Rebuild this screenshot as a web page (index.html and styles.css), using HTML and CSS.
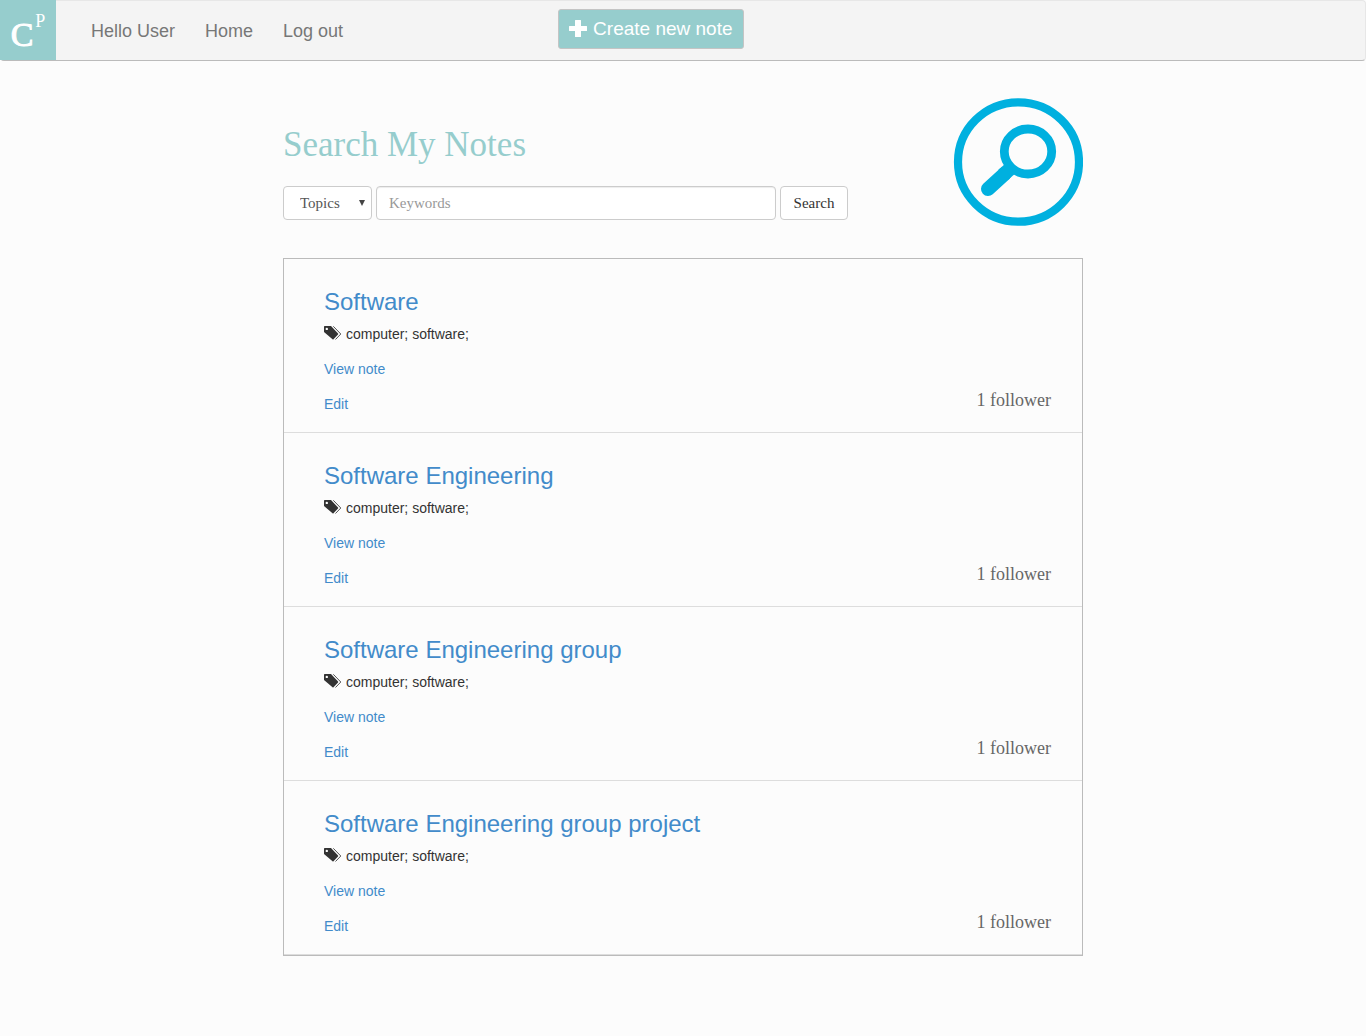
FILE: index.html
```html
<!DOCTYPE html>
<html lang="en">
<head>
<meta charset="utf-8">
<title>Search My Notes</title>
<link rel="stylesheet" href="styles.css">
</head>
<body>
<svg class="sprite" aria-hidden="true">
  <symbol id="tags" viewBox="0 0 18 14">
    <path fill="#333" fill-rule="evenodd" d="M0 .7Q0 0 .7 0H7L14 7.500Q14.400 8 14 8.500L9.500 13.300Q9 13.800 8.500 13.300L0 6ZM2.800 1.700A1.200 1.200 0 1 0 2.800 4.100A1.200 1.200 0 1 0 2.800 1.700Z"/>
    <path fill="none" stroke="#555" d="M9.300 .3L16.800 8L11.500 13.500"/>
  </symbol>
</svg>
<header class="navbar">
  <a class="logo" href="#" aria-label="CP home"><span class="logo-c">C</span><span class="logo-p">P</span></a>
  <nav class="links">
    <a href="#">Hello User</a>
    <a href="#">Home</a>
    <a href="#">Log out</a>
  </nav>
  <button class="create" type="button">
    <svg width="18" height="20" viewBox="0 0 18 20" aria-hidden="true"><path fill="#fff" d="M6 1.500Q6 1 6.500 1H11.500Q12 1 12 1.500V7H17.500Q18 7 18 7.500V11.500Q18 12 17.500 12H12V17.500Q12 18 11.500 18H6.500Q6 18 6 17.500V12H.5Q0 12 0 11.500V7.500Q0 7 .5 7H6Z"/></svg>
    <span>Create new note</span>
  </button>
</header>
<main class="page">
  <section class="search">
    <div>
      <h1>Search My Notes</h1>
      <form class="form">
        <div class="picker">
          <select class="field" aria-label="Search by"><option>Topics</option></select>
          <svg class="arrow" width="6" height="6" viewBox="0 0 6 6" aria-hidden="true"><path fill="#444" d="M0 0H6L3 6Z"/></svg>
        </div>
        <input class="field keywords" type="text" placeholder="Keywords" aria-label="Keywords">
        <button class="field submit" type="button">Search</button>
      </form>
    </div>
    <svg class="lens" width="130" height="130" viewBox="0 0 130 130" aria-hidden="true">
      <g fill="none" stroke="#00b0df">
        <ellipse cx="65.500" cy="65" rx="60.500" ry="59.700" stroke-width="8.200"/>
        <ellipse cx="75" cy="54.500" rx="23.700" ry="22.500" stroke-width="8.800"/>
        <path stroke-width="14" stroke-linecap="round" d="M35 92L52 76.500"/>
        <path stroke-width="14" d="M50 78L58 71"/>
      </g>
    </svg>
  </section>
  <ul class="notes">
    <li class="note">
      <div><h2><a href="#">Software</a></h2>
      <p class="tags"><svg width="18" height="14"><use href="#tags"/></svg>computer; software;</p>
      <p><a href="#">View note</a></p><p><a href="#">Edit</a></p></div>
      <span class="followers">1 follower</span>
    </li>
    <li class="note">
      <div><h2><a href="#">Software Engineering</a></h2>
      <p class="tags"><svg width="18" height="14"><use href="#tags"/></svg>computer; software;</p>
      <p><a href="#">View note</a></p><p><a href="#">Edit</a></p></div>
      <span class="followers">1 follower</span>
    </li>
    <li class="note">
      <div><h2><a href="#">Software Engineering group</a></h2>
      <p class="tags"><svg width="18" height="14"><use href="#tags"/></svg>computer; software;</p>
      <p><a href="#">View note</a></p><p><a href="#">Edit</a></p></div>
      <span class="followers">1 follower</span>
    </li>
    <li class="note">
      <div><h2><a href="#">Software Engineering group project</a></h2>
      <p class="tags"><svg width="18" height="14"><use href="#tags"/></svg>computer; software;</p>
      <p><a href="#">View note</a></p><p><a href="#">Edit</a></p></div>
      <span class="followers">1 follower</span>
    </li>
  </ul>
</main>
</body>
</html>
```
FILE: styles.css
```css
* { box-sizing: border-box; }
body {
  margin: 0;
  background: #fcfcfc;
  color: #333;
  font: 14px/20px "Liberation Sans", Arial, sans-serif;
}
a { color: #428bca; text-decoration: none; }
.sprite { display: none; }

.navbar {
  display: flex;
  background: #f4f4f4;
  border-top: 1px solid #e7e7e7;
  border-right: 1px solid #e7e7e7;
  border-bottom: 1px solid #bbb;
  border-radius: 4px;
  height: 61px;
}
.logo {
  display: flex;
  justify-content: center;
  gap: 2px;
  width: 56px;
  margin-top: -1px;
  background: #96cdcd;
  color: #fff;
  font-family: "Liberation Serif", serif;
}
.logo-c { font-size: 34px; line-height: 70px; -webkit-text-stroke: 1px #fff; }
.logo-p { font-size: 18px; line-height: 42px; }
.links { display: flex; margin-left: 20px; }
.links a { padding: 0 15px; color: #777; font-size: 18px; line-height: 60px; }
.create {
  display: flex;
  align-items: center;
  gap: 6px;
  height: 40px;
  margin: 8px 0 0 200px;
  padding: 0 10px;
  border: 1px solid #c4c4c4;
  border-radius: 3px;
  background: #96cdcd;
  color: #fff;
  font: 19px/24px "Liberation Sans", Arial, sans-serif;
}

.page { max-width: 800px; margin: 0 auto; padding: 36px 0 80px; }
.search { display: flex; justify-content: space-between; }
h1 {
  margin: 28px 0 21px;
  color: #96cdcd;
  font: 35px/40px "Liberation Serif", serif;
}
.form { display: flex; gap: 4px; }
.field {
  height: 34px;
  padding: 0 12px;
  border: 1px solid #ccc;
  border-radius: 4px;
  background: #fff;
  color: #333;
  font: 15px/20px "Liberation Serif", serif;
}
.picker { display: grid; align-items: center; }
.picker > * { grid-area: 1 / 1; }
select.field { width: 89px; padding: 0 16px; appearance: none; color: #555; }
.arrow { justify-self: end; margin-right: 7px; pointer-events: none; }
.keywords { width: 400px; box-shadow: inset 0 1px 1px rgba(0, 0, 0, .075); }
.keywords::placeholder { color: #999; }
.submit { width: 68px; }

.notes {
  margin: 31px 0 0;
  padding: 0;
  border: 1px solid #bbb;
  list-style: none;
}
.note {
  display: flex;
  justify-content: space-between;
  align-items: flex-end;
  padding: 30px 31px 18px 40px;
  border-bottom: 1px solid #ddd;
}
h2 { margin: 0 0 9px; font-size: 24px; font-weight: 400; line-height: 26px; }
p { margin: 0 0 15px; }
p:last-child { margin: 0; }
.tags { display: flex; gap: 4px; }
.tags svg { margin-top: 2px; }
.followers {
  margin-bottom: 4px;
  color: #666;
  font: 18px/20px "Liberation Serif", serif;
}
```
